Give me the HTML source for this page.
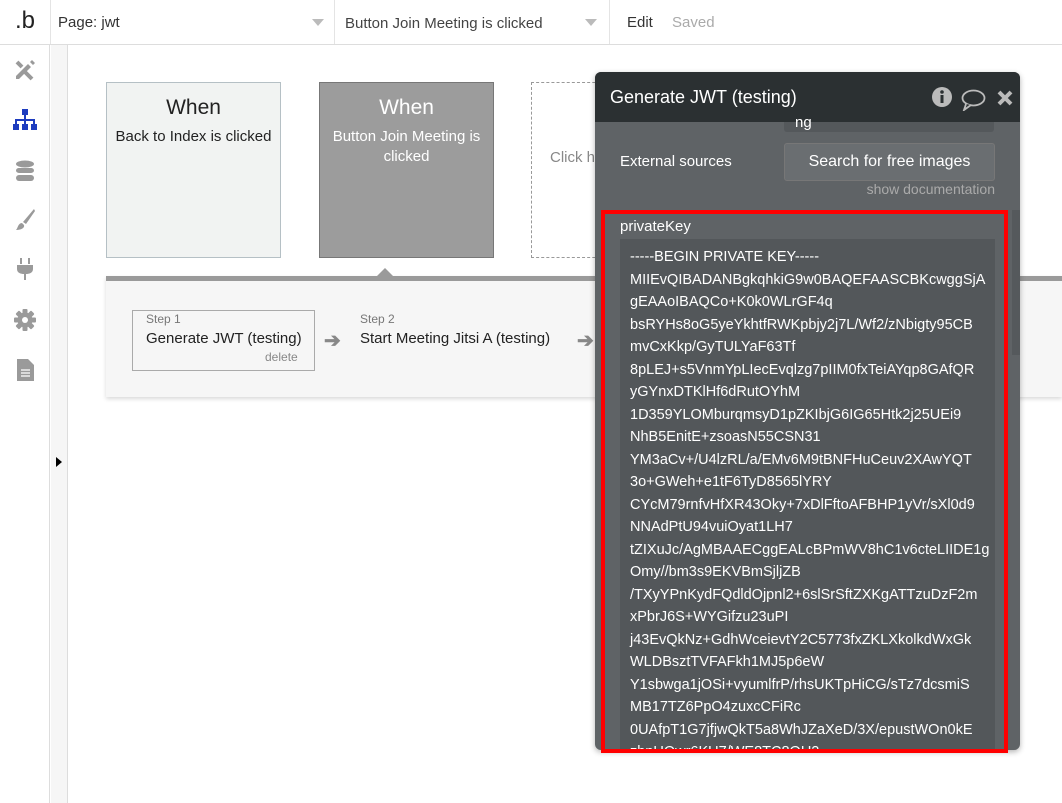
<!DOCTYPE html>
<html><head><meta charset="utf-8"><style>
*{box-sizing:border-box;margin:0;padding:0}
body{width:1062px;height:803px;overflow:hidden;background:#fff;font-family:"Liberation Sans",sans-serif;position:relative;color:#333}
.abs{position:absolute}
.top{left:0;top:0;width:1062px;height:45px;border-bottom:1px solid #ddd;background:#fff}
.sep{top:0;height:44px;width:1px;background:#e4e4e4}
.tri{width:0;height:0;border-left:6px solid transparent;border-right:6px solid transparent;border-top:7px solid #bbb}
.side{left:0;top:45px;width:50px;height:758px;border-right:1px solid #ddd;background:#fff}
.strip{left:51px;top:45px;width:17px;height:758px;background:#f6f6f6;border-right:1px solid #ddd}
.card{top:82px;width:175px;height:176px;text-align:center;font-size:15px;line-height:20px}
.card .w{font-size:21px;margin:15px 0 9px}
.line{font-size:14.5px;line-height:22.5px;color:#fff;white-space:nowrap}
</style></head><body>
<div class="abs top"></div>
<div class="abs" style="left:15px;top:7px;font-size:24px;color:#222">.b</div>
<div class="abs sep" style="left:50px"></div>
<div class="abs" style="left:58px;top:14px;font-size:15px;color:#333">Page: jwt</div>
<div class="abs tri" style="left:312px;top:19px"></div>
<div class="abs sep" style="left:334px"></div>
<div class="abs" style="left:345px;top:15px;font-size:15px;color:#444">Button Join Meeting is clicked</div>
<div class="abs tri" style="left:585px;top:19px"></div>
<div class="abs sep" style="left:609px"></div>
<div class="abs" style="left:627px;top:14px;font-size:15px;color:#333">Edit</div>
<div class="abs" style="left:672px;top:14px;font-size:15px;color:#aaa">Saved</div>
<div class="abs side"></div>
<div class="abs strip"></div>
<div class="abs" style="left:56px;top:457px;width:0;height:0;border-top:5px solid transparent;border-bottom:5px solid transparent;border-left:6px solid #000"></div>
<svg class="abs" style="left:13px;top:58px" width="24" height="24" viewBox="0 0 24 24"><path d="M3 18 L15 6 L18 9 L6 21 L3 21Z M17 4 L19 2 L22 5 L20 7Z" fill="#9a9a9a"/><path d="M4 4 L9 9 M12 14 L19 21" stroke="#9a9a9a" stroke-width="4"/></svg>
<svg class="abs" style="left:12px;top:108px" width="26" height="24" viewBox="0 0 26 24"><rect x="10" y="1" width="6" height="6" fill="#1d3cbf"/><path d="M13 7V12M4 16V12H22V16M13 12V16" stroke="#1d3cbf" stroke-width="2" fill="none"/><rect x="1" y="16" width="6" height="6" fill="#1d3cbf"/><rect x="10" y="16" width="6" height="6" fill="#1d3cbf"/><rect x="19" y="16" width="6" height="6" fill="#1d3cbf"/></svg>
<svg class="abs" style="left:15px;top:160px" width="20" height="22" viewBox="0 0 20 22"><ellipse cx="10" cy="4" rx="9" ry="3.5" fill="#9a9a9a"/><rect x="1" y="8" width="18" height="5" rx="3" fill="#9a9a9a"/><rect x="1" y="15" width="18" height="6" rx="3" fill="#9a9a9a"/></svg>
<svg class="abs" style="left:14px;top:208px" width="22" height="24" viewBox="0 0 22 24"><path d="M20 1 L9 14 L12 16 L21 3Z" fill="#9a9a9a"/><path d="M8 15 C4 15 4 20 2 22 C7 22 11 20 10 17Z" fill="#9a9a9a"/></svg>
<svg class="abs" style="left:16px;top:257px" width="18" height="24" viewBox="0 0 18 24"><rect x="4" y="1" width="2" height="6" fill="#9a9a9a"/><rect x="12" y="1" width="2" height="6" fill="#9a9a9a"/><path d="M1 8H17V12C17 16 13 17 10 17V23H8V17C5 17 1 16 1 12Z" fill="#9a9a9a"/></svg>
<svg class="abs" style="left:14px;top:309px" width="22" height="22" viewBox="0 0 22 22"><g fill="#9a9a9a"><rect x="8.5" y="0" width="5" height="22" rx="1"/><rect x="8.5" y="0" width="5" height="22" rx="1" transform="rotate(45 11 11)"/><rect x="8.5" y="0" width="5" height="22" rx="1" transform="rotate(90 11 11)"/><rect x="8.5" y="0" width="5" height="22" rx="1" transform="rotate(135 11 11)"/><circle cx="11" cy="11" r="7.5"/></g><circle cx="11" cy="11" r="3" fill="#fff"/></svg>
<svg class="abs" style="left:17px;top:359px" width="17" height="22" viewBox="0 0 17 22"><path d="M0 0H11L17 6V22H0Z" fill="#9a9a9a"/><path d="M4 11H13M4 14H13M4 17H13" stroke="#fff" stroke-width="1.2"/></svg>
<div class="abs card" style="left:106px;background:#f1f3f2;border:1px solid #b5c0c5;color:#222"><div class="w">When</div>Back to Index is clicked</div>
<div class="abs card" style="left:319px;background:#9c9c9c;border:1px solid #777;color:#fff"><div class="w">When</div>Button Join Meeting is<br>clicked</div>
<div class="abs" style="left:531px;top:82px;width:100px;height:176px;border:1px dashed #999"></div>
<div class="abs" style="left:550px;top:149px;font-size:15px;color:#888">Click h</div>
<div class="abs" style="left:106px;top:276px;width:956px;height:121px;background:#f6f6f6;border-top:5px solid #9a9a9a;box-shadow:0 2px 4px rgba(0,0,0,.15)"></div>
<div class="abs" style="left:376px;top:268px;width:0;height:0;border-left:9px solid transparent;border-right:9px solid transparent;border-bottom:9px solid #9a9a9a"></div>
<div class="abs" style="left:132px;top:310px;width:183px;height:61px;border:1px solid #aaa;background:#f6f6f6"></div>
<div class="abs" style="left:146px;top:312px;font-size:12px;color:#777">Step 1</div>
<div class="abs" style="left:146px;top:330px;font-size:15px;color:#222">Generate JWT (testing)</div>
<div class="abs" style="left:265px;top:350px;font-size:12px;color:#888">delete</div>
<div class="abs" style="left:324px;top:328px;font-size:20px;color:#888;font-weight:bold">➔</div>
<div class="abs" style="left:360px;top:312px;font-size:12px;color:#777">Step 2</div>
<div class="abs" style="left:360px;top:330px;font-size:15px;color:#222">Start Meeting Jitsi A (testing)</div>
<div class="abs" style="left:577px;top:328px;font-size:20px;color:#888;font-weight:bold">➔</div>
<div class="abs" style="left:595px;top:72px;width:425px;height:678px;background:#5f6366;border-radius:6px;overflow:hidden;box-shadow:0 2px 6px rgba(0,0,0,.3)">
 <div class="abs" style="left:0;top:0;width:425px;height:50px;background:#2b3032"></div>
 <div class="abs" style="left:15px;top:15px;font-size:18px;color:#fff">Generate JWT (testing)</div>
 <svg class="abs" style="left:337px;top:15px" width="20" height="20" viewBox="0 0 20 20"><circle cx="10" cy="10" r="10" fill="#bbb"/><rect x="8.5" y="8" width="3" height="8" fill="#2b3032"/><circle cx="10" cy="5" r="1.8" fill="#2b3032"/></svg>
 <svg class="abs" style="left:366px;top:17px" width="25" height="22" viewBox="0 0 25 22"><ellipse cx="12.5" cy="9" rx="11" ry="7.5" fill="none" stroke="#bbb" stroke-width="1.8"/><path d="M5 15 L3 21 L10 16" fill="#2b3032" stroke="#bbb" stroke-width="1.8"/></svg>
 <svg class="abs" style="left:402px;top:18px" width="16" height="16" viewBox="0 0 16 16"><path d="M2 2L14 14M14 2L2 14" stroke="#bbb" stroke-width="4"/></svg>
 <div class="abs" style="left:189px;top:50px;width:210px;height:10px;background:#54585b;border-radius:0 0 3px 3px"></div>
 <div class="abs" style="left:200px;top:42px;font-size:15px;color:#fff">ng</div>
 <div class="abs" style="left:25px;top:81px;font-size:15px;color:#fff">External sources</div>
 <div class="abs" style="left:189px;top:71px;width:211px;height:38px;background:#6a6e71;border:1px solid #777;border-radius:3px;color:#fff;font-size:16px;text-align:center;line-height:36px">Search for free images</div>
 <div class="abs" style="left:264px;top:109px;width:136px;text-align:right;font-size:14px;color:#aaa;white-space:nowrap">show documentation</div>
 <div class="abs" style="left:417px;top:138px;width:8px;height:145px;background:#55595c"></div>
 <div class="abs" style="left:25px;top:146px;font-size:15px;color:#fff">privateKey</div>
 <div class="abs" style="left:25px;top:167px;width:375px;height:520px;background:#53575a"></div>
 <div class="abs" style="left:35px;top:174px">
 <div class="line">-----BEGIN PRIVATE KEY-----</div>
 <div class="line">MIIEvQIBADANBgkqhkiG9w0BAQEFAASCBKcwggSjA</div>
 <div class="line">gEAAoIBAQCo+K0k0WLrGF4q</div>
 <div class="line">bsRYHs8oG5yeYkhtfRWKpbjy2j7L/Wf2/zNbigty95CB</div>
 <div class="line">mvCxKkp/GyTULYaF63Tf</div>
 <div class="line">8pLEJ+s5VnmYpLIecEvqlzg7pIIM0fxTeiAYqp8GAfQR</div>
 <div class="line">yGYnxDTKlHf6dRutOYhM</div>
 <div class="line">1D359YLOMburqmsyD1pZKIbjG6IG65Htk2j25UEi9</div>
 <div class="line">NhB5EnitE+zsoasN55CSN31</div>
 <div class="line">YM3aCv+/U4lzRL/a/EMv6M9tBNFHuCeuv2XAwYQT</div>
 <div class="line">3o+GWeh+e1tF6TyD8565lYRY</div>
 <div class="line">CYcM79rnfvHfXR43Oky+7xDlFftoAFBHP1yVr/sXl0d9</div>
 <div class="line">NNAdPtU94vuiOyat1LH7</div>
 <div class="line">tZIXuJc/AgMBAAECggEALcBPmWV8hC1v6cteLIIDE1g</div>
 <div class="line">Omy//bm3s9EKVBmSjljZB</div>
 <div class="line">/TXyYPnKydFQdldOjpnl2+6slSrSftZXKgATTzuDzF2m</div>
 <div class="line">xPbrJ6S+WYGifzu23uPI</div>
 <div class="line">j43EvQkNz+GdhWceievtY2C5773fxZKLXkolkdWxGk</div>
 <div class="line">WLDBsztTVFAFkh1MJ5p6eW</div>
 <div class="line">Y1sbwga1jOSi+vyumlfrP/rhsUKTpHiCG/sTz7dcsmiS</div>
 <div class="line">MB17TZ6PpO4zuxcCFiRc</div>
 <div class="line">0UAfpT1G7jfjwQkT5a8WhJZaXeD/3X/epustWOn0kE</div>
 <div class="line">zbpUQwr6KU7/WE8TC8OU2</div>
 </div>
</div>
<div class="abs" style="left:601px;top:210px;width:407px;height:543px;border:4px solid #f00"></div>
</body></html>
